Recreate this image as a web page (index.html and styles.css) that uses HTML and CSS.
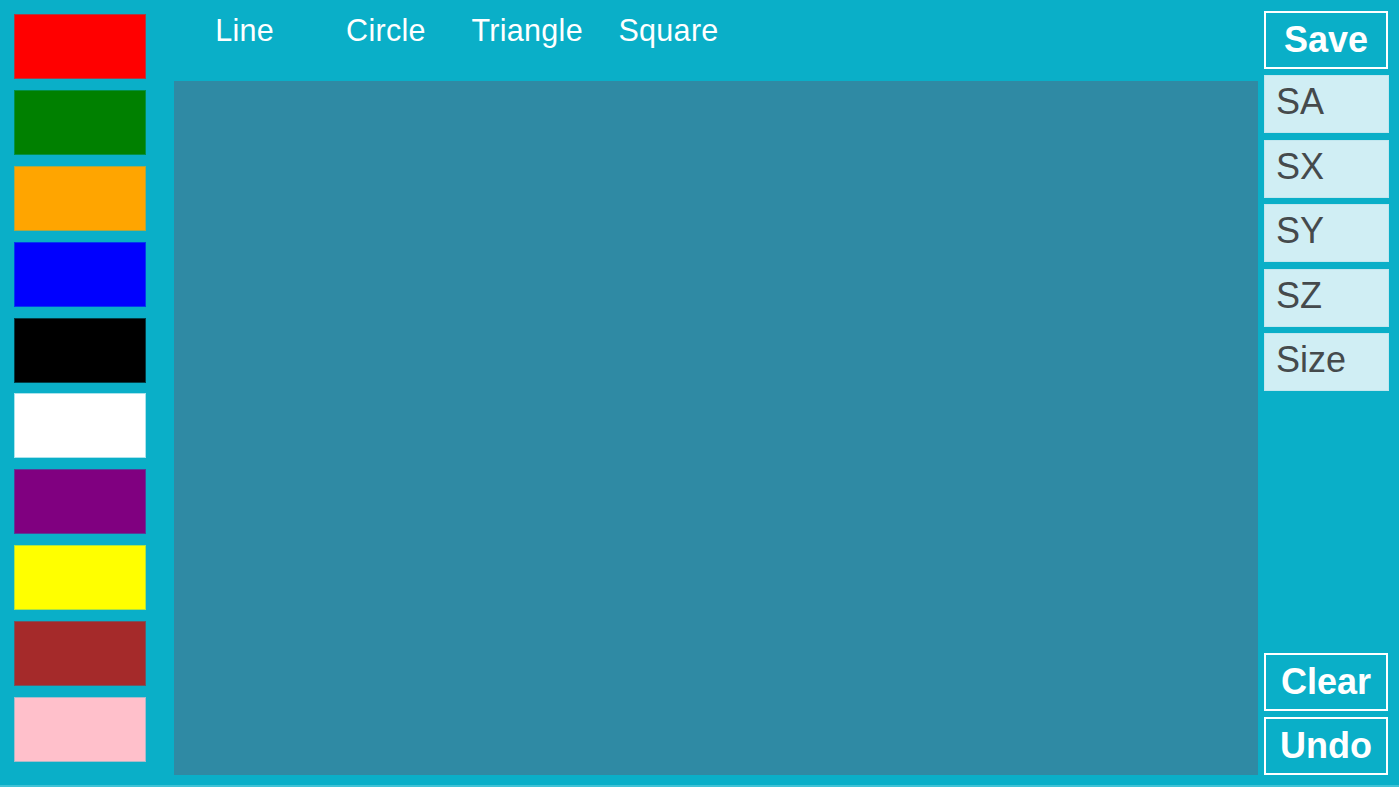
FILE: index.html
```html
<!DOCTYPE html>
<html lang="en">
<head>
<meta charset="utf-8">
<title>Paint</title>
<link rel="stylesheet" href="styles.css">
</head>
<body>
<div class="app">
  <aside class="palette">
    <div class="swatch red"></div>
    <div class="swatch green"></div>
    <div class="swatch orange"></div>
    <div class="swatch blue"></div>
    <div class="swatch black"></div>
    <div class="swatch white"></div>
    <div class="swatch purple"></div>
    <div class="swatch yellow"></div>
    <div class="swatch brown"></div>
    <div class="swatch pink"></div>
  </aside>
  <main class="center">
    <nav class="shapes">
      <span class="shape">Line</span>
      <span class="shape">Circle</span>
      <span class="shape">Triangle</span>
      <span class="shape">Square</span>
    </nav>
    <div class="canvas"></div>
  </main>
  <aside class="tools">
    <div class="btn outline">Save</div>
    <div class="btn light">SA</div>
    <div class="btn light">SX</div>
    <div class="btn light">SY</div>
    <div class="btn light">SZ</div>
    <div class="btn light">Size</div>
    <div class="btn outline push">Clear</div>
    <div class="btn outline">Undo</div>
  </aside>
</div>
</body>
</html>
```
FILE: styles.css
```css
html, body {
  margin: 0;
  padding: 0;
}
body {
  background: #3fc2d6;
  width: 1399px;
  height: 787px;
  overflow: hidden;
  font-family: "Liberation Sans", Arial, sans-serif;
}
.app {
  height: 785px;
  background: #0aafc8;
  display: flex;
  box-sizing: border-box;
  padding-bottom: 10px;
}
.palette {
  width: 131.5px;
  margin-left: 14px;
  padding-top: 14px;
  display: flex;
  flex-direction: column;
  gap: 10.9px;
}
.swatch {
  height: 65px;
  flex: none;
  box-shadow: inset 0 0 0 1px rgba(10, 175, 200, 0.35);
}
.red { background: #ff0000; }
.green { background: #008000; }
.orange { background: #ffa500; }
.blue { background: #0000ff; }
.black { background: #000000; }
.white { background: #ffffff; }
.purple { background: #800080; }
.yellow { background: #ffff00; }
.brown { background: #a52a2a; }
.pink { background: #ffc0cb; }
.center {
  margin-left: 28.5px;
  width: 1084px;
  display: flex;
  flex-direction: column;
}
.shapes {
  height: 81px;
  box-sizing: border-box;
  padding-top: 13px;
  display: flex;
}
.shape {
  width: 141.3px;
  text-align: center;
  color: #ffffff;
  font-size: 30.5px;
  letter-spacing: 0.3px;
  line-height: normal;
}
.canvas {
  flex: 1;
  background: #2f8aa4;
}
.tools {
  margin-left: 6px;
  width: 124px;
  padding-top: 11px;
  display: flex;
  flex-direction: column;
  gap: 6.4px;
}
.btn {
  height: 58px;
  flex: none;
  box-sizing: border-box;
  display: flex;
  align-items: center;
  font-size: 36px;
}
.outline {
  border: 2px solid #ffffff;
  justify-content: center;
  color: #ffffff;
  font-weight: bold;
}
.light {
  background: #d0eef4;
  box-shadow: inset 0 0 0 1px #c2e7ef;
  color: #454a4c;
  padding-left: 12px;
  padding-bottom: 4px;
  width: 125px;
}
.push {
  margin-top: auto;
}
```
